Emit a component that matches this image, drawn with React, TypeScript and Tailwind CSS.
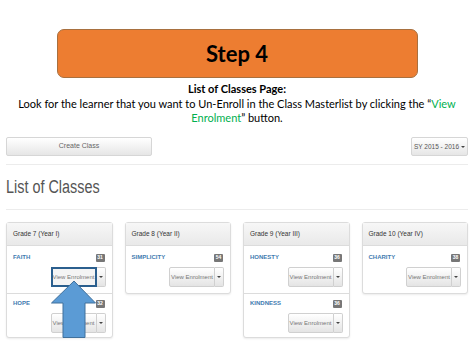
import React from "react";

type Item = { name: string; count: string; active?: boolean };

const classes: { grade: string; items: Item[] }[] = [
  {
    grade: "Grade 7 (Year I)",
    items: [
      { name: "FAITH", count: "31", active: true },
      { name: "HOPE", count: "32" },
    ],
  },
  { grade: "Grade 8 (Year II)", items: [{ name: "SIMPLICITY", count: "54" }] },
  {
    grade: "Grade 9 (Year III)",
    items: [
      { name: "HONESTY", count: "36" },
      { name: "KINDNESS", count: "36" },
    ],
  },
  { grade: "Grade 10 (Year IV)", items: [{ name: "CHARITY", count: "38" }] },
];

function EnrolButton({ active }: { active?: boolean }) {
  return (
    <div className="flex h-[20px]">
      <div
        className={
          active
            ? "w-[46px] flex items-center justify-center border-2 border-[#2b5f8e] bg-[#f4f4f4] text-[6px] text-[#777]"
            : "w-[46px] flex items-center justify-center border border-[#d0d0d0] rounded-l-[2px] bg-linear-to-b from-white to-[#e4e4e4] text-[6px] text-[#777]"
        }
      >
        View Enrolment
      </div>
      <div className="w-[9px] flex items-center justify-center border border-l-0 border-[#d0d0d0] rounded-r-[2px] bg-linear-to-b from-white to-[#e4e4e4]">
        <span className="w-0 h-0 border-x-[2px] border-x-transparent border-t-[2px] border-t-[#444]" />
      </div>
    </div>
  );
}

export default function App() {
  return (
    <div className="relative w-[474px] h-[355px] overflow-hidden bg-white">
      {/* Slide header */}
      <div className="h-[137px] pt-[29px] flex flex-col items-center text-black font-['Lato','Open_Sans',sans-serif]">
        <div className="w-[361px] h-[49px] rounded-[7px] border border-[#a8703f] bg-[#ed7d31] flex items-center justify-center">
          <span className="text-[22px] font-bold leading-none">Step 4</span>
        </div>
        <p className="mt-[4px] text-[11px] leading-[14.5px] font-bold">List of Classes Page:</p>
        <p className="text-[11px] leading-[14.5px] text-center whitespace-nowrap">
          Look for the learner that you want to Un-Enroll in the Class Masterlist by clicking the “
          <span className="text-[#00b050]">View</span>
          <br />
          <span className="text-[#00b050]">Enrolment</span>” button.
        </p>
      </div>

      {/* Screenshot */}
      <div className="font-['Liberation_Sans',Arial,sans-serif]">
        <div className="px-[6px] flex justify-between">
          <div className="w-[146px] h-[19px] flex items-center justify-center rounded-[2px] border border-[#d6d6d6] bg-linear-to-b from-white to-[#e6e6e6] text-[7px] text-[#666]">
            Create Class
          </div>
          <div className="w-[57px] h-[19px] flex items-center justify-center gap-[2px] rounded-[2px] border border-[#d6d6d6] bg-linear-to-b from-white to-[#e6e6e6] text-[6.5px] text-[#555]">
            SY 2015 - 2016
            <span className="w-0 h-0 border-x-[2px] border-x-transparent border-t-[2px] border-t-[#444]" />
          </div>
        </div>
        <div className="mt-[8px] mx-[6px] border-t border-[#ececec]" />
        <div className="h-[44px] px-[6px] flex items-center">
          <h1 className="inline-block origin-left scale-x-80 text-[18px] leading-none text-[#555] whitespace-nowrap">
            List of Classes
          </h1>
        </div>
        <div className="mx-[6px] border-t border-[#ececec]" />

        <div className="mt-[12px] px-[6px] grid grid-cols-4 gap-x-[12px] items-start">
          {classes.map((c) => (
            <div
              key={c.grade}
              className="border border-[#dcdcdc] rounded-[3px] bg-white shadow-[0_1px_2px_rgba(0,0,0,0.08)]"
            >
              <div className="h-[23px] px-[6px] flex items-center border-b border-[#dcdcdc] bg-linear-to-b from-[#f7f7f7] to-[#e9e9e9] text-[6.5px] text-[#333]">
                {c.grade}
              </div>
              {c.items.map((it, i) => (
                <div
                  key={it.name}
                  className={i > 0 ? "px-[6px] pt-[5px] pb-[4px] border-t border-[#dcdcdc]" : "px-[6px] pt-[7px] pb-[6px]"}
                >
                  <div className="flex items-center justify-between h-[9px]">
                    <span className="text-[6px] font-bold text-[#3f7bb0]">{it.name}</span>
                    <span className="min-w-[9px] h-[8px] px-[1px] mr-[1px] rounded-[1px] bg-[#777] text-white text-[5px] font-bold flex items-center justify-center">
                      {it.count}
                    </span>
                  </div>
                  <div className="mt-[5px] flex justify-end">
                    <EnrolButton active={it.active} />
                  </div>
                </div>
              ))}
            </div>
          ))}
        </div>
      </div>

      {/* Callout arrow */}
      <svg
        className="absolute left-[50px] top-[280px] pointer-events-none"
        width="47"
        height="59"
        viewBox="0 0 47 59"
      >
        <polygon
          points="24,1 45.5,23 35,23 35,57.5 13,57.5 13,23 1.5,23"
          fill="#5b9bd5"
          stroke="#41719c"
          strokeWidth="1"
        />
      </svg>
    </div>
  );
}
